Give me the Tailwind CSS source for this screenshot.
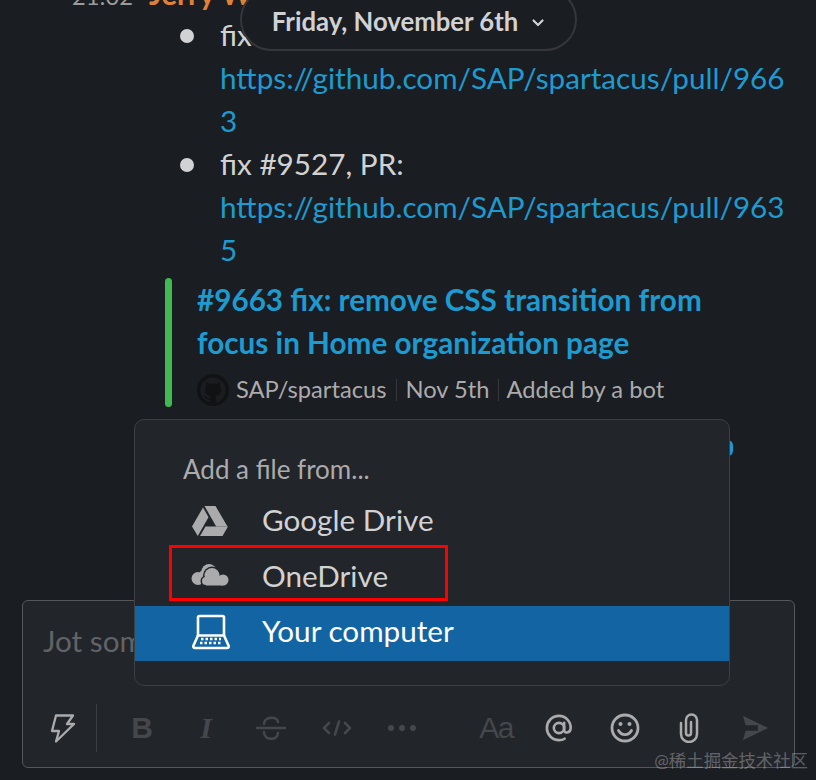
<!DOCTYPE html>
<html><head><meta charset="utf-8"><script src="https://cdn.jsdelivr.net/npm/@tailwindcss/browser@4"></script></head>
<body class="m-0">
<div class="relative w-[816px] h-[780px] overflow-hidden bg-[#1a1d21] font-['Lato','Noto_Sans_CJK_SC',sans-serif] text-[#d1d2d3]">
  <!-- message list -->
  <div class="h-[600px] overflow-hidden">
    <div class="flex items-baseline h-[16px] pl-[72px] -mt-[20px] mb-[17px] text-[23.700px] leading-[28px]">
      <span class="text-[#9a9b9d]">21:02</span><span class="ml-[16px] text-[29.700px] font-bold text-[#e0813a]">Jerry W.</span>
    </div>
    <ul class="ml-[180px] w-[620px] text-[29.700px] leading-[43px]">
      <li class="flex">
        <span class="w-[14px] h-[14px] mt-[16px] mr-[26px] rounded-full bg-[#d1d2d3] shrink-0"></span>
        <div><div>fix #9528, PR:</div><a class="block w-[570px] break-all text-[#1d9bd1]">https://github.com/SAP/spartacus/pull/9663</a></div>
      </li>
      <li class="flex">
        <span class="w-[14px] h-[14px] mt-[16px] mr-[26px] rounded-full bg-[#d1d2d3] shrink-0"></span>
        <div><div>fix #9527, PR:</div><a class="block w-[570px] break-all text-[#1d9bd1]">https://github.com/SAP/spartacus/pull/9635</a></div>
      </li>
    </ul>
    <div class="flex ml-[165px] mt-[7px] h-[129px]">
      <div class="w-[7px] rounded-full bg-[#3fb950] shrink-0"></div>
      <div class="ml-[25px]">
        <div class="w-[540px] text-[29.700px] leading-[43px] font-bold text-[#1d9bd1]">#9663 fix: remove CSS transition from focus in Home organization page</div>
        <div class="flex items-center h-[30px] mt-[11px] text-[23.700px] text-[#ababad]">
          <svg class="w-[32px] h-[32px] mr-[7px]" viewBox="0 0 16 16"><circle cx="8" cy="8" r="8" fill="#111213"/><path fill="#1a1c1f" d="M8 1.600C4.500 1.600 1.600 4.500 1.600 8c0 2.800 1.800 5.200 4.400 6.100.3.100.4-.1.4-.3v-1.100c-1.800.4-2.200-.8-2.200-.8-.3-.7-.7-.9-.7-.9-.6-.4 0-.4 0-.4.600 0 1 .7 1 .7.600 1 1.500.7 1.900.5.100-.4.200-.7.400-.9-1.400-.2-2.900-.7-2.900-3.200 0-.7.200-1.300.7-1.700-.1-.2-.3-.8.100-1.700 0 0 .5-.2 1.800.7.500-.1 1-.2 1.500-.2s1 .1 1.500.2c1.300-.9 1.800-.7 1.800-.7.300.9.100 1.500.100 1.700.4.400.7 1 .7 1.700 0 2.500-1.500 3-2.900 3.200.2.200.4.600.4 1.200v1.800c0 .2.100.4.400.3 2.600-.9 4.400-3.300 4.400-6.100 0-3.500-2.900-6.400-6.400-6.400z"/></svg>
          <span>SAP/spartacus</span><span class="w-px h-[22px] mx-[9px] bg-[#35373b]"></span><span>Nov 5th</span><span class="w-px h-[22px] mx-[8px] bg-[#35373b]"></span><span>Added by a bot</span>
        </div>
      </div>
    </div>
  </div>

  <!-- composer -->
  <div class="flex flex-col justify-between ml-[22px] w-[773px] h-[168px] rounded-[6px] border border-[#55575a] bg-[#222529]">
    <div class="pl-[20px] pt-[20px] text-[29.700px] leading-[40px] text-[#616366]">Jot something down</div>
    <div class="flex items-center h-[64px] mb-[7px] pl-[25px]">
      <div class="flex justify-center w-[30px]">
        <svg class="w-[26px] h-[29px]" viewBox="0 0 26 29" fill="none" stroke="#ababad" stroke-width="2.300" stroke-linejoin="round"><path d="M6 1.500h17l-6 8.500h7L6 27.500 9 17H2z"/></svg>
      </div>
      <span class="w-px h-[48px] ml-[18px] bg-[#3c3e42]"></span>
      <div class="flex items-center text-[#45474b] ml-[13px]">
        <span class="w-[64px] text-center text-[30px] font-bold leading-none font-['Liberation_Sans',sans-serif]">B</span>
        <span class="w-[64px] text-center text-[30px] italic leading-none font-['Liberation_Serif',serif] font-bold">I</span>
        <div class="flex justify-center w-[66px]"><svg class="w-[30px] h-[24px]" viewBox="0 0 30 24" fill="none" stroke="#45474b" stroke-width="2.600" stroke-linecap="round"><path d="M1 12h28M8 8c0-8 14-8 14-2M8 16c0 9 14 9 14 1"/></svg></div>
        <div class="flex justify-center w-[66px]"><svg class="w-[30px] h-[16px]" viewBox="0 0 30 16" fill="none" stroke="#45474b" stroke-width="2.600" stroke-linecap="round" stroke-linejoin="round"><path d="M7 3L2 8l5 5M23 3l5 5-5 5M17 1.500l-4 13"/></svg></div>
        <div class="flex justify-center w-[64px]"><svg class="w-[28px] h-[6px]" viewBox="0 0 28 6" fill="#45474b"><circle cx="3" cy="3" r="3"/><circle cx="14" cy="3" r="3"/><circle cx="25" cy="3" r="3"/></svg></div>
        <span class="ml-[30px] w-[64px] text-center text-[30px] leading-none font-['Liberation_Sans',sans-serif] tracking-[-1.500px]">Aa</span>
      </div>
      <div class="flex justify-center w-[62px]"><svg class="w-[28px] h-[28px]" viewBox="0 0 30 30" fill="none" stroke="#ababad" stroke-width="2.800" stroke-linecap="round"><circle cx="15" cy="15" r="5.500"/><path d="M20.500 9.500V17c0 4 6.500 4 7-1.500C28 8 22 2 15 2 7.500 2 2 8 2 15s5.500 13 13 13c2.500 0 4.500-.5 6-1.500"/></svg></div>
      <div class="flex justify-center w-[70px]"><svg class="w-[30px] h-[30px]" viewBox="0 0 30 30" fill="none" stroke="#ababad" stroke-width="2.800" stroke-linecap="round"><circle cx="15" cy="15" r="13"/><path d="M8.500 17.500c3 5.500 10 5.500 13 0"/><circle cx="10.500" cy="11" r="2" fill="#ababad" stroke="none"/><circle cx="19.500" cy="11" r="2" fill="#ababad" stroke="none"/></svg></div>
      <div class="flex justify-center w-[58px]"><svg class="w-[20px] h-[30px]" viewBox="0 0 20 30" fill="none" stroke="#ababad" stroke-width="2.500" stroke-linecap="round"><path d="M2 10v11a8 8 0 0 0 16 0V7a5.500 5.500 0 0 0-11 0v13a2.500 2.500 0 0 0 5 0V9"/></svg></div>
      <div class="flex justify-center w-[74px]"><svg class="w-[28px] h-[28px]" viewBox="0 0 30 28" fill="#45474b"><path d="M2 1l27 13L2 27l3-10h13v-6H5z"/></svg></div>
    </div>
  </div>

  <!-- peek behind popover -->
  <div class="absolute left-[722px] top-[440px] w-[11px] h-[16px] rounded-full bg-[#1d9bd1]"></div>

  <!-- date pill -->
  <div class="absolute left-[240px] -top-[12px] flex items-center justify-center w-[337px] h-[63px] pt-[4px] rounded-full border-2 border-[#35373b] bg-[#1a1d21] text-[25.700px] font-bold text-[#d1d2d3]">
    <span>Friday, November 6th</span>
    <svg class="ml-[13px] mt-[2px] w-[14px] h-[10px]" viewBox="0 0 14 10" fill="none" stroke="#d1d2d3" stroke-width="2.200" stroke-linecap="round" stroke-linejoin="round"><path d="M2.500 2.500L7 7l4.500-4.500"/></svg>
  </div>

  <!-- popover -->
  <div class="absolute left-[134px] top-[419px] w-[596px] h-[267px] rounded-[10px] border border-[#3d3f43] bg-[#222529]">
    <div class="pl-[48px] pt-[32px] h-[75px] text-[26px] leading-[34px] text-[#ababad]">Add a file from...</div>
    <div class="flex items-center h-[55px] pb-[4px] text-[#d1d2d3]">
      <div class="flex w-[127px] pl-[57px]">
        <svg class="w-[36px] h-[30px]" viewBox="0 0 36 30" fill="#ababad"><path d="M12.500 0h11l12 20.500H24.200z"/><path d="M11 1.500l5.500 9.800L5.800 30 0 20.500z"/><path d="M13.500 20.500h22.500L30.500 30H8z"/></svg>
      </div>
      <span class="text-[29.700px]">Google Drive</span>
    </div>
    <div class="flex items-center h-[56px] pb-[4px] text-[#d1d2d3]">
      <div class="flex w-[127px] pl-[56px]">
        <svg class="w-[38px] h-[22px] -mt-[2px]" viewBox="0 0 38 22"><g fill="#ababad"><circle cx="18" cy="7.500" r="7.500"/><circle cx="7" cy="14.500" r="6.500"/><circle cx="13" cy="11" r="5"/></g><g fill="#222529"><circle cx="21" cy="11.500" r="9"/><circle cx="32" cy="16" r="7"/><circle cx="15" cy="17" r="5.500"/><rect x="10" y="16" width="28" height="6"/></g><g fill="#ababad"><circle cx="21" cy="11.500" r="7.500"/><circle cx="32" cy="16" r="5.500"/><circle cx="15" cy="17" r="4"/><rect x="15" y="15" width="17" height="6.500"/></g></svg>
      </div>
      <span class="text-[29.700px]">OneDrive</span>
    </div>
    <div class="flex items-center h-[55px] pb-[4px] bg-[#1264a3] text-white">
      <div class="flex w-[127px] pl-[57px]">
        <svg class="w-[38px] h-[36px]" viewBox="0 0 38 36" fill="none" stroke="#fff" stroke-width="2.600" stroke-linejoin="round"><path d="M6 22V3.500c0-1 .5-1.500 1.500-1.500h23c1 0 1.500.5 1.500 1.500V22"/><path d="M6 21.500h26l4.500 10c.5 1.500 0 2.500-1.500 2.500H3c-1.500 0-2-1-1.500-2.500z"/><path stroke-width="2.400" stroke-dasharray="2.500 2" d="M9 25h20M8 29h22"/></svg>
      </div>
      <span class="text-[29.700px]">Your computer</span>
    </div>
  </div>

  <!-- annotation -->
  <div class="absolute left-[169px] top-[545px] w-[279px] h-[56px] border-[3px] border-[#ff0000]"></div>
  <!-- watermark -->
  <div class="absolute right-[8px] bottom-[9px] text-[17.400px] leading-[20px] text-white/30">@稀土掘金技术社区</div>
</div>
</body></html>
